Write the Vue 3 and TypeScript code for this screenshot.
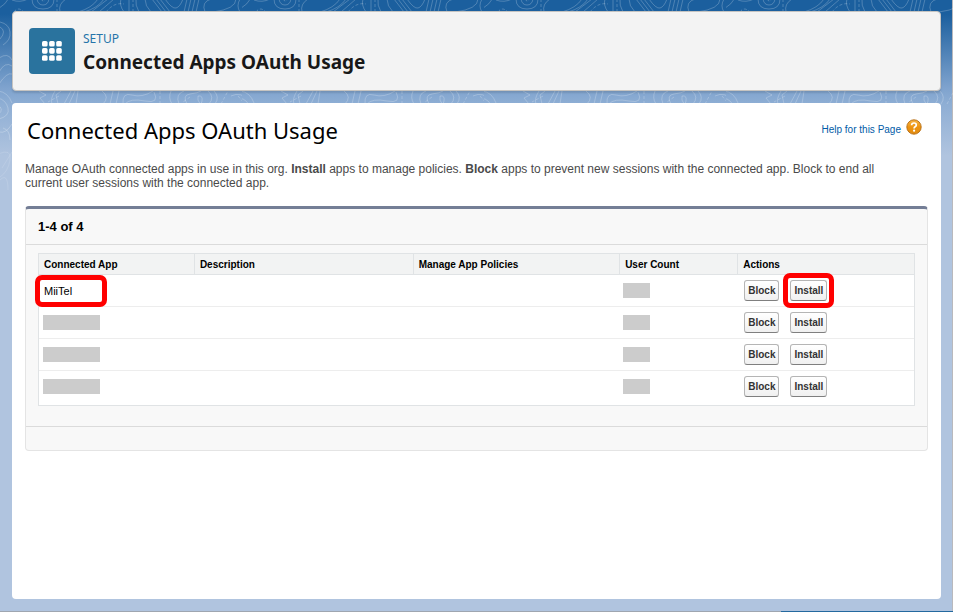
<script setup lang="ts">
interface AppRow {
  id: number
  name: string | null
  highlighted: boolean
}

const title = 'Connected Apps OAuth Usage'

const rows: AppRow[] = [
  { id: 1, name: 'MiiTel', highlighted: true },
  { id: 2, name: null, highlighted: false },
  { id: 3, name: null, highlighted: false },
  { id: 4, name: null, highlighted: false },
]

const dots = [0, 1, 2].flatMap((r) => [0, 1, 2].map((c) => ({ x: c * 7.1, y: r * 7.1 })))
</script>

<template>
  <div class="page">
    <svg class="contours" aria-hidden="true">
      <defs>
        <pattern id="topography" width="242" height="220" patternUnits="userSpaceOnUse">
          <g fill="none" stroke="#fff" stroke-opacity="0.22">
            <path d="M-2 9Q6 4 9-2M12 0Q20 3 28-1M32-1Q32 9 43 9T54-1M37-1Q38 5 43 5T49-1" />
            <path d="M60 12Q58 4 66-1M78 12Q92 8 98-1M84 12Q98 8 104-1M91 12L108-1M99 12L114-1" />
            <path d="M124 12Q119 5 121-1M129 12V-1M139 12Q135 5 136-1M145-1Q145 6 151 12M152-1L162 12M156-1L166 12M160-1L170 12M165-1Q172 9 176 8T183-1M187-1L184 12M191-1L188 12M195-1L192 12M199-1L196 12" />
            <path d="M205 12Q201 2 211-1M213 12Q236 9 236-1M240 12Q236 6 240-1" />
            <path stroke-dasharray="3 2" d="M41-1Q43 3 46-1M57-1V12M106 12Q114 2 124 4M133-1V12M14 12Q18 6 24 12" />
            <path d="M0 22Q9 24 10 32T3 45M0 27Q7 31 0 39M-1 58Q8 52 12 60M-1 72Q5 61 12 66M-1 84Q7 72 12 74" />
            <path d="M-2 91Q8 92 12 103M-2 98Q6 100 8 108T-1 119M-2 105Q4 109-1 114M3 128Q10 130 10 140M12 124Q6 134-1 132" />
            <path d="M39 91L46 95L40 98L45 104M55 91Q50 99 52 104M61 91L56 95L58 104M71 91L64 104M75 91L69 104M78 91L76 104" />
            <path d="M102 91Q110 97 103 104M113 91L110 104M119 91L116 104M123 104Q122 92 132 95T153 91M125 104Q130 98 145 101T154 92" />
            <path d="M171 91Q168 98 172 104M179 104Q175 94 184 91M187 104Q182 95 190 94T201 91M198 96Q203 95 202 101T198 100ZM208 91Q215 97 209 104M214 91Q220 97 215 104M231 96Q241 91 249 101" />
            <path stroke-dasharray="3 2" d="M59 96L48 102M160 91V104M190 97L183 102M221 104L228 91M238 96L244 103" />
            <path stroke-opacity="0.12" d="M-2 154Q12 148 10 160T0 177M2 168L12 152M-1 181Q8 171 8 190" />
          </g>
        </pattern>
      </defs>
      <rect width="100%" height="100%" fill="url(#topography)" />
    </svg>

    <header class="card page-header">
      <span class="app-icon">
        <svg width="20" height="20" viewBox="0 0 20 20" aria-hidden="true">
          <rect v-for="d in dots" :key="`${d.x}-${d.y}`" :x="d.x" :y="d.y" width="5.6" height="5.6" rx="1.6" fill="#fff" />
        </svg>
      </span>
      <div class="heading">
        <span class="eyebrow">SETUP</span>
        <h1>{{ title }}</h1>
      </div>
    </header>

    <main class="card content">
      <div class="title-row">
        <h2>{{ title }}</h2>
        <a class="help" href="#help">
          <span class="help-text">Help for this Page</span>
          <svg width="16" height="16" viewBox="0 0 16 16" aria-hidden="true">
            <defs>
              <linearGradient id="amber" x1="0" y1="0" x2="0" y2="1">
                <stop offset="0" stop-color="#f6b64a" />
                <stop offset="0.5" stop-color="#ee9410" />
                <stop offset="1" stop-color="#e08a10" />
              </linearGradient>
            </defs>
            <circle cx="8" cy="8" r="7.2" fill="url(#amber)" stroke="#b36b12" stroke-width="0.9" />
            <path d="M5.6 6.2Q5.7 4 8 4T10.3 6Q10.3 7.1 9.1 7.8Q8.1 8.4 8.1 9.4" fill="none" stroke="#fff" stroke-width="1.7" />
            <circle cx="8.1" cy="11.7" r="1.1" fill="#fff" />
          </svg>
        </a>
      </div>

      <p class="description">
        Manage OAuth connected apps in use in this org. <b>Install</b> apps to manage policies.
        <b>Block</b> apps to prevent new sessions with the connected app. Block to end all current
        user sessions with the connected app.
      </p>

      <section class="panel">
        <h3>1-4 of 4</h3>
        <div class="panel-body">
          <table>
            <colgroup>
              <col class="col-app" />
              <col class="col-description" />
              <col class="col-policies" />
              <col class="col-count" />
              <col />
            </colgroup>
            <thead>
              <tr>
                <th scope="col">Connected App</th>
                <th scope="col">Description</th>
                <th scope="col">Manage App Policies</th>
                <th scope="col">User Count</th>
                <th scope="col">Actions</th>
              </tr>
            </thead>
            <tbody>
              <tr v-for="row in rows" :key="row.id">
                <td>
                  <span v-if="row.name" class="app-name" :class="{ marked: row.highlighted }">{{ row.name }}</span>
                  <span v-else class="mask mask-name"></span>
                </td>
                <td></td>
                <td></td>
                <td><span class="mask mask-count"></span></td>
                <td>
                  <div class="actions">
                    <button type="button">Block</button>
                    <span class="action" :class="{ marked: row.highlighted }">
                      <button type="button">Install</button>
                    </span>
                  </div>
                </td>
              </tr>
            </tbody>
          </table>
        </div>
        <div class="panel-footer"></div>
      </section>
    </main>
  </div>
</template>

<style>
body {
  margin: 0;
}
</style>

<style scoped>
.page {
  position: relative;
  box-sizing: border-box;
  min-height: 100vh;
  padding: 11px 12px 13px;
  display: flex;
  flex-direction: column;
  gap: 12px;
  font-family: "Liberation Sans", Arial, sans-serif;
  color: #000;
  background:
    linear-gradient(90deg, #9fa6b0 0 82%, #24699f 82%) bottom / 100% 1px no-repeat,
    linear-gradient(#b9b9bd, #b9b9bd) right / 1px 100% no-repeat,
    linear-gradient(#1b5f9e 0, #1b5f9e 14px, #7fa3ce 88px, #8eaed4 104px, #b0c4df 156px);
}

.contours {
  position: absolute;
  top: 0;
  left: 0;
  width: 100%;
  height: 200px;
}

.card {
  position: relative;
  border-radius: 4px;
}

.page-header {
  display: flex;
  align-items: center;
  gap: 8px;
  padding: 16px;
  border: 1px solid #c6c4c1;
  background: #f3f3f3;
  box-shadow: 0 2px 2px rgba(0, 0, 0, 0.12);
}

.app-icon {
  display: flex;
  align-items: center;
  justify-content: center;
  width: 46px;
  height: 46px;
  border-radius: 4px;
  background: #2a739e;
}

.heading {
  font-family: "Noto Sans", "Open Sans", sans-serif;
}

.eyebrow {
  display: block;
  font-size: 12px;
  line-height: 22px;
  color: #2574a9;
}

h1 {
  margin: 0;
  font-size: 19px;
  line-height: 24px;
  color: #181818;
}

.content {
  flex: 1;
  padding: 14px 13px;
  background: #fff;
}

.title-row {
  display: flex;
  justify-content: space-between;
  align-items: flex-start;
  padding: 0 6px 0 2px;
}

h2 {
  margin: 0;
  font: 400 22px/26px "Noto Sans", "Open Sans", sans-serif;
}

.help {
  display: flex;
  align-items: flex-start;
  gap: 5px;
  padding-top: 2px;
  font-size: 10px;
  color: #015ba7;
  text-decoration: none;
}

.help-text {
  line-height: 22px;
}

.description {
  margin: 19px 0 16px;
  padding-right: 20px;
  font-size: 12px;
  line-height: 14px;
  color: #4a4a4a;
}

.panel {
  overflow: hidden;
  border: 1px solid #e4e4e4;
  border-top: 3px solid #747e96;
  border-radius: 4px;
  background: #f8f8f8;
}

h3 {
  margin: 0;
  padding: 0 12px;
  border-bottom: 1px solid #dbdbdb;
  font-size: 13px;
  line-height: 35px;
}

.panel-body {
  padding: 8px 12px 20px;
}

table {
  width: 100%;
  table-layout: fixed;
  border: 1px solid #e0e3e5;
  border-spacing: 0;
  background: #fff;
}

.col-app {
  width: 17.7%;
}

.col-description {
  width: 25%;
}

.col-policies {
  width: 23.6%;
}

.col-count {
  width: 13.5%;
}

th {
  padding: 2px 5px 0;
  border-bottom: 1px solid #e0e3e5;
  background: #f2f3f3;
  font-size: 10px;
  line-height: 18px;
  text-align: left;
}

th + th {
  border-left: 1px solid #e0e3e5;
}

td {
  height: 31px;
  padding: 0 4px;
  border-bottom: 1px solid #ededed;
  font-size: 11px;
}

tbody tr:last-child td {
  padding-bottom: 3px;
  border-bottom: 0;
}

.app-name {
  position: relative;
  display: block;
  padding-left: 1px;
}

.mask {
  display: block;
  height: 15px;
  background: #ccc;
}

.mask-name {
  width: 57px;
}

.mask-count {
  width: 27px;
}

.actions {
  display: flex;
  gap: 11px;
  padding-left: 3px;
}

.action {
  position: relative;
  display: flex;
}

button {
  height: 21px;
  padding: 0 3px;
  border: 1px solid #b5b5b5;
  border-bottom-color: #7f7f7f;
  border-radius: 3px;
  background: linear-gradient(#fff, #f0f0f0);
  font: 700 10px/19px "Liberation Sans", Arial, sans-serif;
  color: #333;
}

/* Red call-out frame drawn over the marked item */
.marked::after {
  content: "";
  position: absolute;
  box-sizing: border-box;
  border: 5px solid #f00;
  border-radius: 7px;
}

.app-name.marked::after {
  top: -10px;
  left: -8px;
  width: 72px;
  height: 32px;
}

.action.marked::after {
  inset: -7px;
}

.panel-footer {
  height: 23px;
  border-top: 1px solid #dbdbdb;
}
</style>
